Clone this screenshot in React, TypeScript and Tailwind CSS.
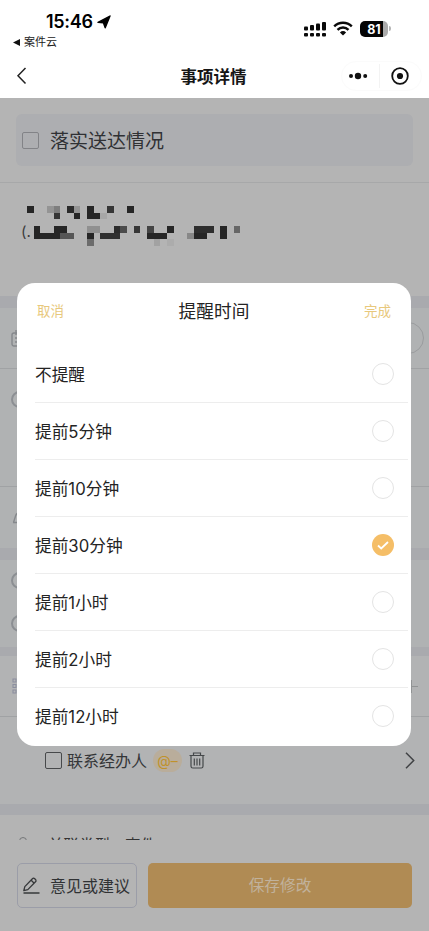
import React from 'react';

const options = [
  { label: '不提醒' },
  { label: '提前5分钟' },
  { label: '提前10分钟' },
  { label: '提前30分钟', checked: true },
  { label: '提前1小时' },
  { label: '提前2小时' },
  { label: '提前12小时' },
];

// masked name: [column, row, length, colour]
const blocks: [number, number, number, string][] = [
  [0, 0, 1, '#262626'], [3, 0, 1, '#949494'], [4, 0, 1, '#7e7e7e'], [6, 0, 1, '#2b2b2b'], [7, 0, 1, '#949494'],
  [9, 0, 1, '#262626'], [12, 0, 1, '#363636'], [15, 0, 1, '#262626'],
  [4, 1, 1, '#363636'], [7, 1, 1, '#262626'], [9, 1, 2, '#262626'], [11, 1, 1, '#a7a7a7'],
  [1, 3, 1, '#262626'], [4, 3, 2, '#262626'], [9, 3, 2, '#909090'], [13, 3, 1, '#2b2b2b'], [14, 3, 1, '#4b4b4b'],
  [16, 3, 1, '#363636'], [18, 3, 1, '#444'], [21, 3, 1, '#262626'], [25, 3, 3, '#2e2e2e'], [29, 3, 1, '#262626'], [31, 3, 1, '#666'],
  [1, 4, 4, '#262626'], [5, 4, 2, '#565656'], [9, 4, 1, '#262626'], [11, 4, 3, '#303030'],
  [18, 4, 3, '#262626'], [24, 4, 1, '#888'], [25, 4, 2, '#262626'], [29, 4, 1, '#262626'],
  [9, 5, 1, '#6c6c6c'], [19, 5, 1, '#a2a2a2'], [21, 5, 1, '#acacac'],
];

function StatusBar() {
  return (
    <div className="relative flex h-[54px] justify-between">
      <div>
        <div className="mt-[12px] ml-[46px] flex h-5 items-center gap-1">
          <span className="font-['Inter'] text-[18px] leading-5 font-semibold tracking-[-0.3px]">15:46</span>
          <svg width="14" height="14" viewBox="0 0 14 14">
            <path d="M13 1 1 7.4l5.4.4 1.8 5z" fill="#000" stroke="#000" strokeWidth="1.4" strokeLinejoin="round" />
          </svg>
        </div>
        <div className="mt-[2px] ml-[13px] flex h-4 items-center gap-[4px] text-[11px] leading-4 text-[#222]">
          <svg width="7" height="7" viewBox="0 0 7 7"><path d="M0 3.5 7 0v7z" fill="#111" /></svg>
          案件云
        </div>
      </div>
      <div className="mt-[20px] mr-[38px] flex h-[17px] items-center">
        <svg width="23" height="16" viewBox="0 0 23 16">
          <g fill="#0a0a0a">
            <rect x="0" y="5.5" width="4" height="4" rx="1" />
            <rect x="6" y="4" width="4" height="5.5" rx="1" />
            <rect x="12" y="2.5" width="4" height="7" rx="1" />
            <rect x="18" y="1" width="4" height="8.5" rx="1" />
            <rect x="0" y="12" width="4" height="3.6" rx="1" />
            <rect x="6" y="12" width="4" height="3.6" rx="1" />
            <rect x="12" y="12" width="4" height="3.6" rx="1" />
            <rect x="18" y="12" width="4" height="3.6" rx="1" />
          </g>
        </svg>
        <svg className="ml-[6px]" width="20" height="15" viewBox="0 0 20 15" fill="none" stroke="#0a0a0a" strokeWidth="2.4">
          <path d="M1.2 5.4a12.6 12.6 0 0 1 17.6 0" />
          <path d="M4.5 8.8a7.8 7.8 0 0 1 11 0" />
          <path d="M10 14.6 6.9 11.5a4.5 4.5 0 0 1 6.2 0z" fill="#0a0a0a" stroke="none" />
        </svg>
        <div className="ml-[7px] flex h-[16px] w-[28px] items-center justify-center rounded-[5px] bg-[linear-gradient(90deg,#050505_82%,#ababab_82%)] pt-px font-['Inter'] text-[12.5px] leading-[15px] font-bold text-white">
          81
        </div>
        <div className="ml-px h-[5px] w-[2px] rounded-r-full bg-[#b5b5b5]" />
      </div>
    </div>
  );
}

function NavBar() {
  return (
    <div className="flex h-11 items-center justify-between">
      <svg className="ml-4 w-[70px]" width="70" height="18" viewBox="0 0 70 18" fill="none" stroke="#222" strokeWidth="1.5">
        <path d="M9.5 1 2 8.8l7.5 7.8" />
      </svg>
      <div className="pt-[2px] text-[16.5px] font-bold text-[#151515]">事项详情</div>
      <div className="mr-[7px] flex h-[30px] w-[81px] items-center rounded-full border border-[#fbfbfb]">
        <svg className="ml-[6px]" width="20" height="8" viewBox="0 0 20 8" fill="#111">
          <circle cx="3" cy="4" r="2" /><circle cx="10" cy="4" r="3.2" /><circle cx="17.2" cy="4" r="2" />
        </svg>
        <div className="ml-[11px] h-6 w-px bg-[#f3f3f3]" />
        <svg className="ml-[11px]" width="18" height="18" viewBox="0 0 18 18">
          <circle cx="9" cy="9" r="7.8" fill="none" stroke="#111" strokeWidth="1.8" />
          <circle cx="9" cy="9" r="3.1" fill="#111" />
        </svg>
      </div>
    </div>
  );
}

function HalfCircle() {
  return <div className="h-[17px] w-[17px] rounded-full border-2 border-[#8c8f93]" />;
}

function Content() {
  return (
    <>
      <div className="h-[85px] border-b border-[#a7a8a9] px-4 pt-4">
        <div className="flex h-[52px] items-center rounded-md bg-[#adaeb1] pl-[6px]">
          <div className="h-[17px] w-[17px] rounded-[2px] border border-[#828387]" />
          <div className="ml-[11px] pt-[4px] text-[19px] text-[#303134]">落实送达情况</div>
        </div>
      </div>
      <div className="flex h-[113px] pt-[23px] pl-[21px]">
        <div className="mt-[16px] w-[5.5px] text-[15px] leading-5 whitespace-nowrap text-[#3b3b3b]">(.</div>
        <svg width="216" height="40" viewBox="0 0 32.4 6" shapeRendering="crispEdges">
          {blocks.map(([x, y, w, fill]) => (
            <rect key={`${x}-${y}`} x={x} y={y} width={w} height="1" fill={fill} />
          ))}
        </svg>
      </div>
      <div className="h-3 bg-[#a9aaae]" />
      <div className="h-[240px] bg-[#b0b2b3]">
        <div className="flex h-[61px] items-center justify-between border-b border-[#a0a2a4] pr-[5px] pl-[11px]">
          <svg width="16" height="17" viewBox="0 0 16 17" fill="none" stroke="#85888c" strokeWidth="1.4">
            <rect x="1" y="3" width="14" height="13" rx="2" /><path d="M5 0v5M11 0v5M4 8h8M4 12h8" />
          </svg>
          <div className="h-[32px] w-[32px] rounded-full border border-[#9a9c9e]" />
        </div>
        <div className="flex h-[118px] items-start border-b border-[#a0a2a4] pt-[22px] pl-[11px]"><HalfCircle /></div>
        <div className="pt-[22px] pl-[12px]">
          <svg width="16" height="16" viewBox="0 0 16 16" fill="none" stroke="#85888c" strokeWidth="1.4">
            <path d="M1 13.5h14M1.5 13.5 3.7 6.5a4.5 4.5 0 0 1 8.6 0l2.2 7" />
          </svg>
        </div>
      </div>
      <div className="h-3 bg-[#a9aaae]" />
      <div className="flex h-[87px] flex-col gap-[26px] bg-[#b0b2b3] pt-[12px] pl-[11px]">
        <HalfCircle />
        <HalfCircle />
      </div>
      <div className="h-[9px] bg-[#a9aaae]" />
      <div className="h-[148px] bg-[#b2b3b4]">
        <div className="flex h-[61px] items-center justify-between border-b border-[#a0a2a4] pr-[11px] pl-[12px]">
          <svg width="14" height="16" viewBox="0 0 14 16" fill="none" stroke="#8b8e9f" strokeWidth="1.1">
            <path d="M1 1h3v3H1zM1 6.5h3v3H1zM1 12h3v3H1zM6 2.5h7M6 8h7M6 13.5h7" />
          </svg>
          <svg width="13" height="13" viewBox="0 0 13 13" stroke="#919394"><path d="M6.5 0v13M0 6.5h13" /></svg>
        </div>
        <div className="mt-[29px] flex h-7 items-center pr-[14px] pl-[45px]">
          <div className="h-[17px] w-[17px] rounded-[2px] border-[1.5px] border-[#47494b]" />
          <div className="ml-[5px] w-[80px] pt-px text-[16px] whitespace-nowrap text-[#343638]">联系经办人</div>
          <div className="ml-[6px] flex h-[23px] w-[29px] items-center justify-center rounded-xl bg-[#b9ad9b] font-['Inter'] text-[14px] whitespace-nowrap text-[#c0922a]">@–</div>
          <svg className="ml-[7px]" width="16" height="17" viewBox="0 0 16 17" fill="none" stroke="#45484a" strokeWidth="1.2">
            <path d="M.5 3.5h15M4.5 3.3V1h7v2.3M2 3.5v10.7a1.8 1.8 0 0 0 1.8 1.8h8.4a1.8 1.8 0 0 0 1.8-1.8V3.5M5.3 6.5v7M8 6.5v7M10.7 6.5v7" />
          </svg>
          <svg className="ml-auto" width="10" height="17" viewBox="0 0 10 17" fill="none" stroke="#414345" strokeWidth="1.5">
            <path d="m1 .8 7.7 7.7L1 16.2" />
          </svg>
        </div>
      </div>
      <div className="h-[11px] bg-[#a9aaae]" />
      <div className="flex h-[25px] items-start overflow-hidden pt-[22px] pl-[16px]">
        <div className="ml-[3px] h-3 w-[8px] shrink-0 rounded-full border border-[#747678]" />
        <div className="ml-[21px] text-[15.5px] leading-[17px] whitespace-pre text-[#333]">关联类型</div>
        <div className="ml-[15px] text-[15.5px] leading-[17px] text-[#333]">事件</div>
      </div>
    </>
  );
}

function Footer() {
  return (
    <div className="flex h-[91px] gap-[11px] px-[17px] pt-[23px]">
      <button className="flex h-[45px] w-[120px] shrink-0 items-center rounded-[5px] border border-[#9b9da8] pl-[5px] text-[16px] text-[#303234]">
        <svg className="mr-[10px]" width="17" height="17" viewBox="0 0 17 17" fill="none" stroke="#36383a" strokeWidth="1.3" strokeLinejoin="round">
          <path d="M1.8 9.6 9.4 1.7a1.6 1.6 0 0 1 2.3 0l.8.8a1.6 1.6 0 0 1 0 2.3l-7.7 7.8-4 1zM8.2 3.2l3 3M.5 16h16" />
        </svg>
        <span className="pt-px">意见或建议</span>
      </button>
      <button className="h-[45px] flex-1 rounded-[5px] bg-[#b08b54] pt-px text-[15.7px] text-[#c1b29c]">保存修改</button>
    </div>
  );
}

function ReminderDialog() {
  return (
    <div className="absolute top-[283px] left-[17px] h-[463px] w-[394px] rounded-[18px] bg-white text-[#242424]">
      <div className="flex h-[63px] items-center justify-between px-[20px] pb-[7px]">
        <span className="text-[13.5px] text-[#e8c87c]">取消</span>
        <span className="pt-[3px] text-[17.7px]">提醒时间</span>
        <span className="text-[13.5px] text-[#e8c87c]">完成</span>
      </div>
      <div className="pl-[18px]">
        {options.map(({ label, checked }) => (
          <div key={label} className="mr-[3px] flex h-[57px] items-center justify-between border-b border-[#ededed] pr-[14px] last:h-[56px] last:border-b-0">
            <span className="pt-[3px] text-[16.7px]">{label}</span>
            {checked ? (
              <div className="flex h-[22px] w-[22px] items-center justify-center rounded-full bg-[#f5be67]">
                <svg width="12" height="9" viewBox="0 0 12 9" fill="none" stroke="#fff" strokeWidth="1.8"><path d="m1 4.5 3.2 3L11 1" /></svg>
              </div>
            ) : (
              <div className="h-[22px] w-[22px] rounded-full border border-[#e4e4e4]" />
            )}
          </div>
        ))}
      </div>
    </div>
  );
}

export default function App() {
  return (
    <div className="relative h-[931px] w-[429px] overflow-hidden bg-[#b4b4b4] font-['Inter','Noto_Sans_CJK_SC',sans-serif]">
      <div className="h-[98px] bg-white">
        <StatusBar />
        <NavBar />
      </div>
      <Content />
      <Footer />
      <ReminderDialog />
    </div>
  );
}
